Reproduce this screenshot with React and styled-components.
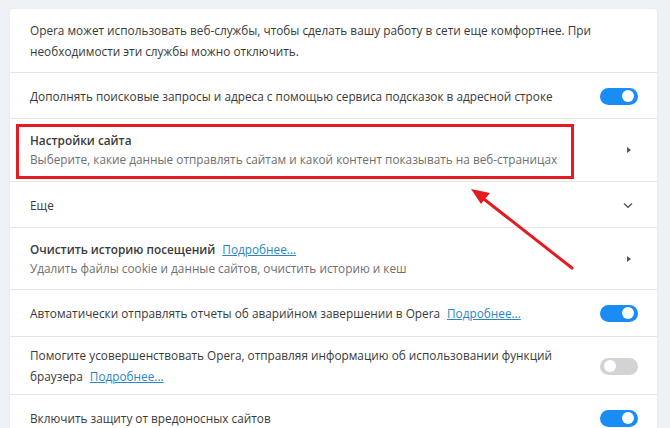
import React from "react";
import styled, { createGlobalStyle } from "styled-components";

const Global = createGlobalStyle`
  html, body { margin: 0; padding: 0; background: #eef2f6; }
  body { font-family: "Open Sans", "Noto Sans", sans-serif; }
`;

const Page = styled.div`
  position: relative;
  width: 670px;
  height: 428px;
  overflow: hidden;
  padding: 9px 13px 0 10px;
  box-sizing: border-box;
`;

const Card = styled.div`
  background: #fff;
  border-radius: 3px;
  box-shadow: 0 0 2px rgba(0, 0, 0, 0.08);
`;

const Row = styled.div`
  position: relative;
  display: flex;
  align-items: center;
  justify-content: space-between;
  padding: ${(p) => p.$pt || 13}px 19px ${(p) => p.$pb || 12}px 20px;
  border-top: ${(p) => (p.$first ? "none" : "1px solid #e4e6e9")};
`;

const Texts = styled.div`
  display: flex;
  flex-direction: column;
  max-width: ${(p) => p.$max || "560px"};
`;

const Label = styled.div`
  font-size: 11.8px;
  line-height: ${(p) => p.$lh || "20px"};
  color: #3a3a3a;
  font-weight: ${(p) => (p.$bold ? 600 : 400)};
`;

const Sub = styled.div`
  font-size: 11.8px;
  line-height: 19px;
  color: #6f6f6f;
`;

const Link = styled.a`
  color: #2b86c5;
  text-decoration: underline;
  font-weight: 400;
  margin-left: 7px;
`;

const Toggle = styled.div`
  flex: none;
  position: relative;
  width: 38px;
  height: 17px;
  border-radius: 9px;
  background: ${(p) => (p.$on ? "#1a8df5" : "#d3d3d7")};
  &::after {
    content: "";
    position: absolute;
    top: 2.5px;
    ${(p) => (p.$on ? "right: 4px;" : "left: 4px;")}
    width: 12px;
    height: 12px;
    border-radius: 50%;
    background: #fff;
  }
`;

const Tri = styled.div`
  flex: none;
  margin-right: 7px;
  width: 0;
  height: 0;
  border-top: 3.5px solid transparent;
  border-bottom: 3.5px solid transparent;
  border-left: 4px solid #555;
`;

const Chevron = styled.svg`
  flex: none;
  margin-right: 5px;
`;

const Highlight = styled.div`
  position: absolute;
  left: 6px;
  top: 5px;
  width: 558px;
  height: 55px;
  border: 3px solid #e41c22;
  box-sizing: border-box;
  pointer-events: none;
`;

const Overlay = styled.svg`
  position: absolute;
  left: 0;
  top: 0;
  pointer-events: none;
`;

export default function App() {
  return (
    <>
      <Global />
      <Page>
        <Card>
          <Row $first $pt={11} $pb={10}>
            <Texts $max="600px">
              <Label $lh="21px">
                Opera может использовать веб-службы, чтобы сделать вашу работу в сети еще комфортнее. При
                необходимости эти службы можно отключить.
              </Label>
            </Texts>
          </Row>
          <Row>
            <Label>Дополнять поисковые запросы и адреса с помощью сервиса подсказок в адресной строке</Label>
            <Toggle $on />
          </Row>
          <Row $pt={12} $pb={12}>
            <Texts>
              <Label $bold $lh="19px">Настройки сайта</Label>
              <Sub>Выберите, какие данные отправлять сайтам и какой контент показывать на веб-страницах</Sub>
            </Texts>
            <Tri />
            <Highlight />
          </Row>
          <Row>
            <Label>Еще</Label>
            <Chevron width="10" height="7" viewBox="0 0 10 7">
              <path d="M1 1.5 L5 5.2 L9 1.5" fill="none" stroke="#555" strokeWidth="1.4" />
            </Chevron>
          </Row>
          <Row $pt={12} $pb={11}>
            <Texts>
              <Label $bold $lh="19px">
                Очистить историю посещений<Link href="#">Подробнее...</Link>
              </Label>
              <Sub>Удалить файлы cookie и данные сайтов, очистить историю и кеш</Sub>
            </Texts>
            <Tri />
          </Row>
          <Row $pt={13} $pb={13}>
            <Label>
              Автоматически отправлять отчеты об аварийном завершении в Opera<Link href="#">Подробнее...</Link>
            </Label>
            <Toggle $on />
          </Row>
          <Row $pt={8} $pb={7}>
            <Texts $max="530px">
              <Label $lh="21px">
                Помогите усовершенствовать Opera, отправляя информацию об использовании функций браузера
                <Link href="#">Подробнее...</Link>
              </Label>
            </Texts>
            <Toggle />
          </Row>
          <Row>
            <Label>Включить защиту от вредоносных сайтов</Label>
            <Toggle $on />
          </Row>
        </Card>
        <Overlay width="670" height="428" viewBox="0 0 670 428">
          <line x1="572" y1="268" x2="480" y2="196" stroke="#e41c22" strokeWidth="3" strokeLinecap="round" />
          <polygon points="471,189 490,193 481,204" fill="#e41c22" />
        </Overlay>
      </Page>
    </>
  );
}
